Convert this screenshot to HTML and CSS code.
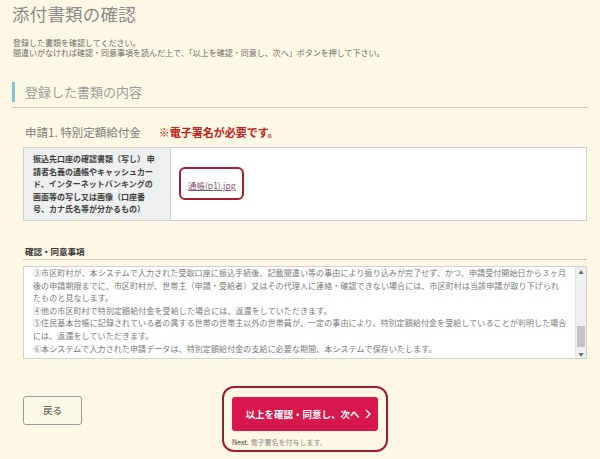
FILE: index.html
```html
<!DOCTYPE html>
<html lang="ja">
<head>
<meta charset="utf-8">
<title>添付書類の確認</title>
<link rel="stylesheet" href="styles.css">
</head>
<body>
<main class="page">
  <h1 class="title">添付書類の確認</h1>
  <p class="lead">登録した書類を確認してください。<br>間違いがなければ確認・同意事項を読んだ上で、「以上を確認・同意し、次へ」ボタンを押して下さい。</p>

  <h2 class="section-head"><span class="section-bar"></span>登録した書類の内容</h2>

  <section class="app">
    <h3 class="app-title">申請1. 特別定額給付金<span class="req">※電子署名が必要です。</span></h3>

    <table class="docs">
      <tr>
        <th class="doc-name">振込先口座の確認書類（写し） 申<br>請者名義の通帳やキャッシュカー<br>ド、インターネットバンキングの<br>画面等の写し又は画像（口座番<br>号、カナ氏名等が分かるもの）</th>
        <td class="doc-file"><span class="mark"><a class="file-link" href="#">通帳(p1).jpg</a></span></td>
      </tr>
    </table>

    <h4 class="agree-head">確認・同意事項</h4>
    <div class="agree-box">
      <div class="agree-text">③市区町村が、本システムで入力された受取口座に振込手続後、記載間違い等の事由により振り込みが完了せず、かつ、申請受付開始日から３ヶ月<br>後の申請期限までに、市区町村が、世帯主（申請・受給者）又はその代理人に連絡・確認できない場合には、市区町村は当該申請が取り下げられ<br>たものと見なします。<br>④他の市区町村で特別定額給付金を受給した場合には、返還をしていただきます。<br>⑤住民基本台帳に記録されている者の属する世帯の世帯主以外の世帯員が、一定の事由により、特別定額給付金を受給していることが判明した場合<br>には、返還をしていただきます。<br>⑥本システムで入力された申請データは、特別定額給付金の支給に必要な期間、本システムで保存いたします。</div>
      <div class="scrollbar">
        <span class="arrow">▲</span>
        <span class="track"><span class="thumb"></span></span>
        <span class="arrow">▼</span>
      </div>
    </div>

    <div class="actions">
      <button class="btn-back" type="button">戻る</button>
      <div class="next-mark">
        <button class="btn-next" type="button">以上を確認・同意し、次へ<svg class="chev" width="6" height="10" viewBox="0 0 6 10"><path d="M1 1l4 4-4 4" fill="none" stroke="#fff" stroke-width="1.4"/></svg></button>
        <p class="next-note"><span class="next-en">Next.</span> 電子署名を付与します。</p>
      </div>
    </div>
  </section>
</main>
</body>
</html>
```
FILE: styles.css
```css
* { box-sizing: border-box; }
html, body { margin: 0; padding: 0; }
body {
  background: #fdf8e3;
  font-family: "Noto Sans CJK JP", "Noto Sans", sans-serif;
  color: #555;
}
.page {
  padding: 0 12px;
}
.title {
  margin: 0;
  padding-top: 2px;
  font-size: 17.5px;
  line-height: 24px;
  font-weight: normal;
  color: #8a8a8a;
  letter-spacing: 0.2px;
}
.lead {
  margin: 12px 0 0 1px;
  font-size: 8px;
  line-height: 10px;
  color: #6a6a6a;
}
.section-head {
  margin: 24px 0 0;
  display: flex;
  align-items: center;
  gap: 10px;
  font-size: 13px;
  line-height: 20px;
  font-weight: normal;
  color: #9a9a9a;
  padding-bottom: 5px;
  border-bottom: 1px solid #cfcab2;
}
.section-bar {
  width: 3px;
  height: 20px;
  background: #84c3d6;
}
.app {
  padding: 0 1px 0 11px;
}
.app-title {
  margin: 16px 0 0 2px;
  font-size: 11.5px;
  line-height: 16px;
  font-weight: normal;
  color: #7b7b7b;
}
.req {
  margin-left: 18px;
  color: #c0211b;
  font-weight: bold;
  font-size: 11px;
}
.docs {
  margin-top: 7px;
  width: 100%;
  border-collapse: collapse;
  background: #fff;
}
.doc-name {
  width: 147px;
  border: 1px solid #cdcdcd;
  background: #eef0f0;
  padding: 5px 4px 4px 9px;
  text-align: left;
  font-size: 8px;
  line-height: 12.6px;
  font-weight: bold;
  color: #3f3f3f;
  white-space: nowrap;
}
.doc-file {
  border: 1px solid #cdcdcd;
  padding: 0 0 0 8px;
  vertical-align: middle;
}
.mark {
  display: inline-block;
  padding: 7px 6px 7px 7px;
  border: 2px solid #a41f30;
  border-radius: 6px;
  line-height: 12px;
}
.file-link {
  font-size: 8.5px;
  color: #84566a;
}
.agree-head {
  margin: 24px 0 0;
  padding: 0 0 2px 2px;
  font-size: 8.5px;
  line-height: 12px;
  font-weight: bold;
  color: #333;
  border-bottom: 1px solid #cfcab2;
}
.agree-box {
  margin-top: 6px;
  height: 93px;
  display: flex;
  border: 1px solid #d0d0d0;
  background: #fff;
  overflow: hidden;
}
.agree-text {
  flex: 1;
  padding: 0 0 0 9px;
  font-size: 8px;
  line-height: 12.6px;
  letter-spacing: 0.1px;
  color: #777;
  white-space: nowrap;
  overflow: hidden;
}
.scrollbar {
  width: 11px;
  display: flex;
  flex-direction: column;
  background: #f0f0f0;
  border-left: 1px solid #e4e4e4;
}
.arrow {
  height: 9px;
  font-size: 5px;
  line-height: 9px;
  text-align: center;
  color: #666;
}
.track {
  flex: 1;
  display: flex;
  flex-direction: column;
  justify-content: flex-end;
  padding: 0 1px 2px;
}
.thumb {
  height: 21px;
  background: #c3c3c3;
}
.actions {
  margin-top: 27px;
  display: flex;
  align-items: flex-start;
}
.btn-back {
  margin-top: 10px;
  width: 59px;
  height: 29px;
  border: 1px solid #9a9a9a;
  border-radius: 3px;
  background: #fcf8e6;
  font-family: inherit;
  font-size: 9.5px;
  color: #444;
  padding: 0;
}
.next-mark {
  margin-left: 140px;
  width: 166px;
  border: 2px solid #9e1c2c;
  border-radius: 12px;
  padding: 9px 8px 3px;
}
.btn-next {
  width: 146px;
  height: 34px;
  border: none;
  border-radius: 3px;
  background: #d6184c;
  color: #fff;
  font-family: inherit;
  font-weight: bold;
  font-size: 9.5px;
  display: flex;
  align-items: center;
  justify-content: center;
  gap: 5px;
  padding: 0 0 0 6px;
}
.chev { display: block; }
.next-note {
  margin: 6px 0 0;
  font-size: 7px;
  line-height: 10px;
  color: #8a8a8a;
}
.next-en { color: #333; }
```
